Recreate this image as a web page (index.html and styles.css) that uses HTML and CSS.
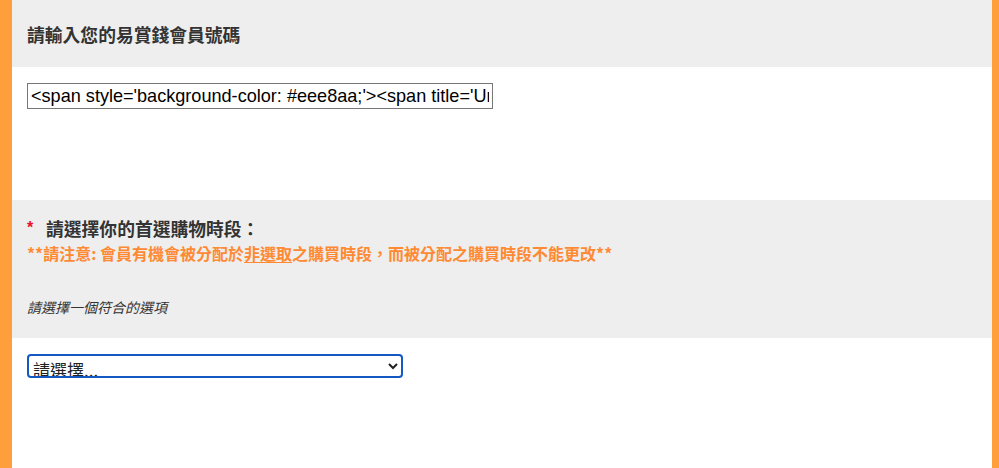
FILE: index.html
```html
<!DOCTYPE html>
<html lang="zh-Hant">
<head>
<meta charset="utf-8">
<title>易賞錢</title>
<link rel="stylesheet" href="styles.css">
</head>
<body>
<div class="frame">
  <div class="q-head q-head-1">
    <div class="q-title">請輸入您的易賞錢會員號碼</div>
  </div>
  <div class="q-body q-body-1">
    <input class="text-input" type="text" value="<span style='background-color: #eee8aa;'><span title='Unknown'>">
  </div>
  <div class="q-head q-head-2">
    <div class="q-title"><span class="star">*</span>請選擇你的首選購物時段：</div>
    <div class="notice">**請注意: 會員有機會被分配於<u>非選取</u>之購買時段，而被分配之購買時段不能更改**</div>
    <div class="hint">請選擇一個符合的選項</div>
  </div>
  <div class="q-body q-body-2">
    <select class="choice">
      <option>請選擇...</option>
    </select>
  </div>
</div>
</body>
</html>
```
FILE: styles.css
```css
html, body {
  margin: 0;
  padding: 0;
  height: 100%;
}
body {
  background: #ff9f3b;
  font-family: "Liberation Sans", "Noto Sans CJK TC", sans-serif;
  overflow: hidden;
}
.frame {
  margin: 0 7px 0 12px;
  background: #ffffff;
  min-height: 100%;
}
.q-head {
  background: #eeeeee;
  padding-left: 15px;
  box-sizing: border-box;
}
.q-head-1 {
  height: 67px;
  padding-top: 22px;
}
.q-title {
  font-family: "Noto Sans CJK TC", sans-serif;
  font-weight: bold;
  font-size: 17.8px;
  line-height: 24px;
  color: #333333;
}
.q-body-1 {
  height: 133px;
  padding: 16px 0 0 15px;
  box-sizing: border-box;
}
.text-input {
  width: 466px;
  height: 26px;
  box-sizing: border-box;
  border: 1px solid #777777;
  border-radius: 0;
  padding: 0 3px;
  font-family: "Liberation Sans", sans-serif;
  font-size: 18.1px;
  color: #000000;
  margin: 0;
}
.q-head-2 {
  height: 138px;
  padding-top: 16px;
  padding-left: 10px;
}
.q-head-2 .q-title {
  display: flex;
  align-items: center;
}
.star {
  color: #e8102a;
  font-size: 16px;
  width: 24px;
  padding-left: 5px;
  box-sizing: border-box;
  font-family: "Liberation Sans", sans-serif;
}
.notice {
  margin-top: 2px;
  padding-left: 5px;
  font-family: "Noto Sans CJK TC", sans-serif;
  font-weight: bold;
  font-size: 16px;
  line-height: 22px;
  color: #ff8a33;
}
.notice u {
  text-decoration-thickness: 1px;
  text-underline-offset: 2px;
}
.hint {
  margin-top: 33px;
  padding-left: 5px;
  font-family: "Noto Sans CJK TC", sans-serif;
  font-style: italic;
  font-size: 14px;
  line-height: 20px;
  color: #333333;
}
.q-body-2 {
  padding: 16px 0 0 15px;
  height: 130px;
  box-sizing: border-box;
}
.choice {
  width: 376px;
  height: 24px;
  box-sizing: border-box;
  border: 2px solid #1458c4;
  border-radius: 4px;
  background: #ffffff;
  font-family: "Noto Sans CJK TC", sans-serif;
  font-size: 17px;
  color: #222222;
  padding: 0;
  margin: 0;
}
```
